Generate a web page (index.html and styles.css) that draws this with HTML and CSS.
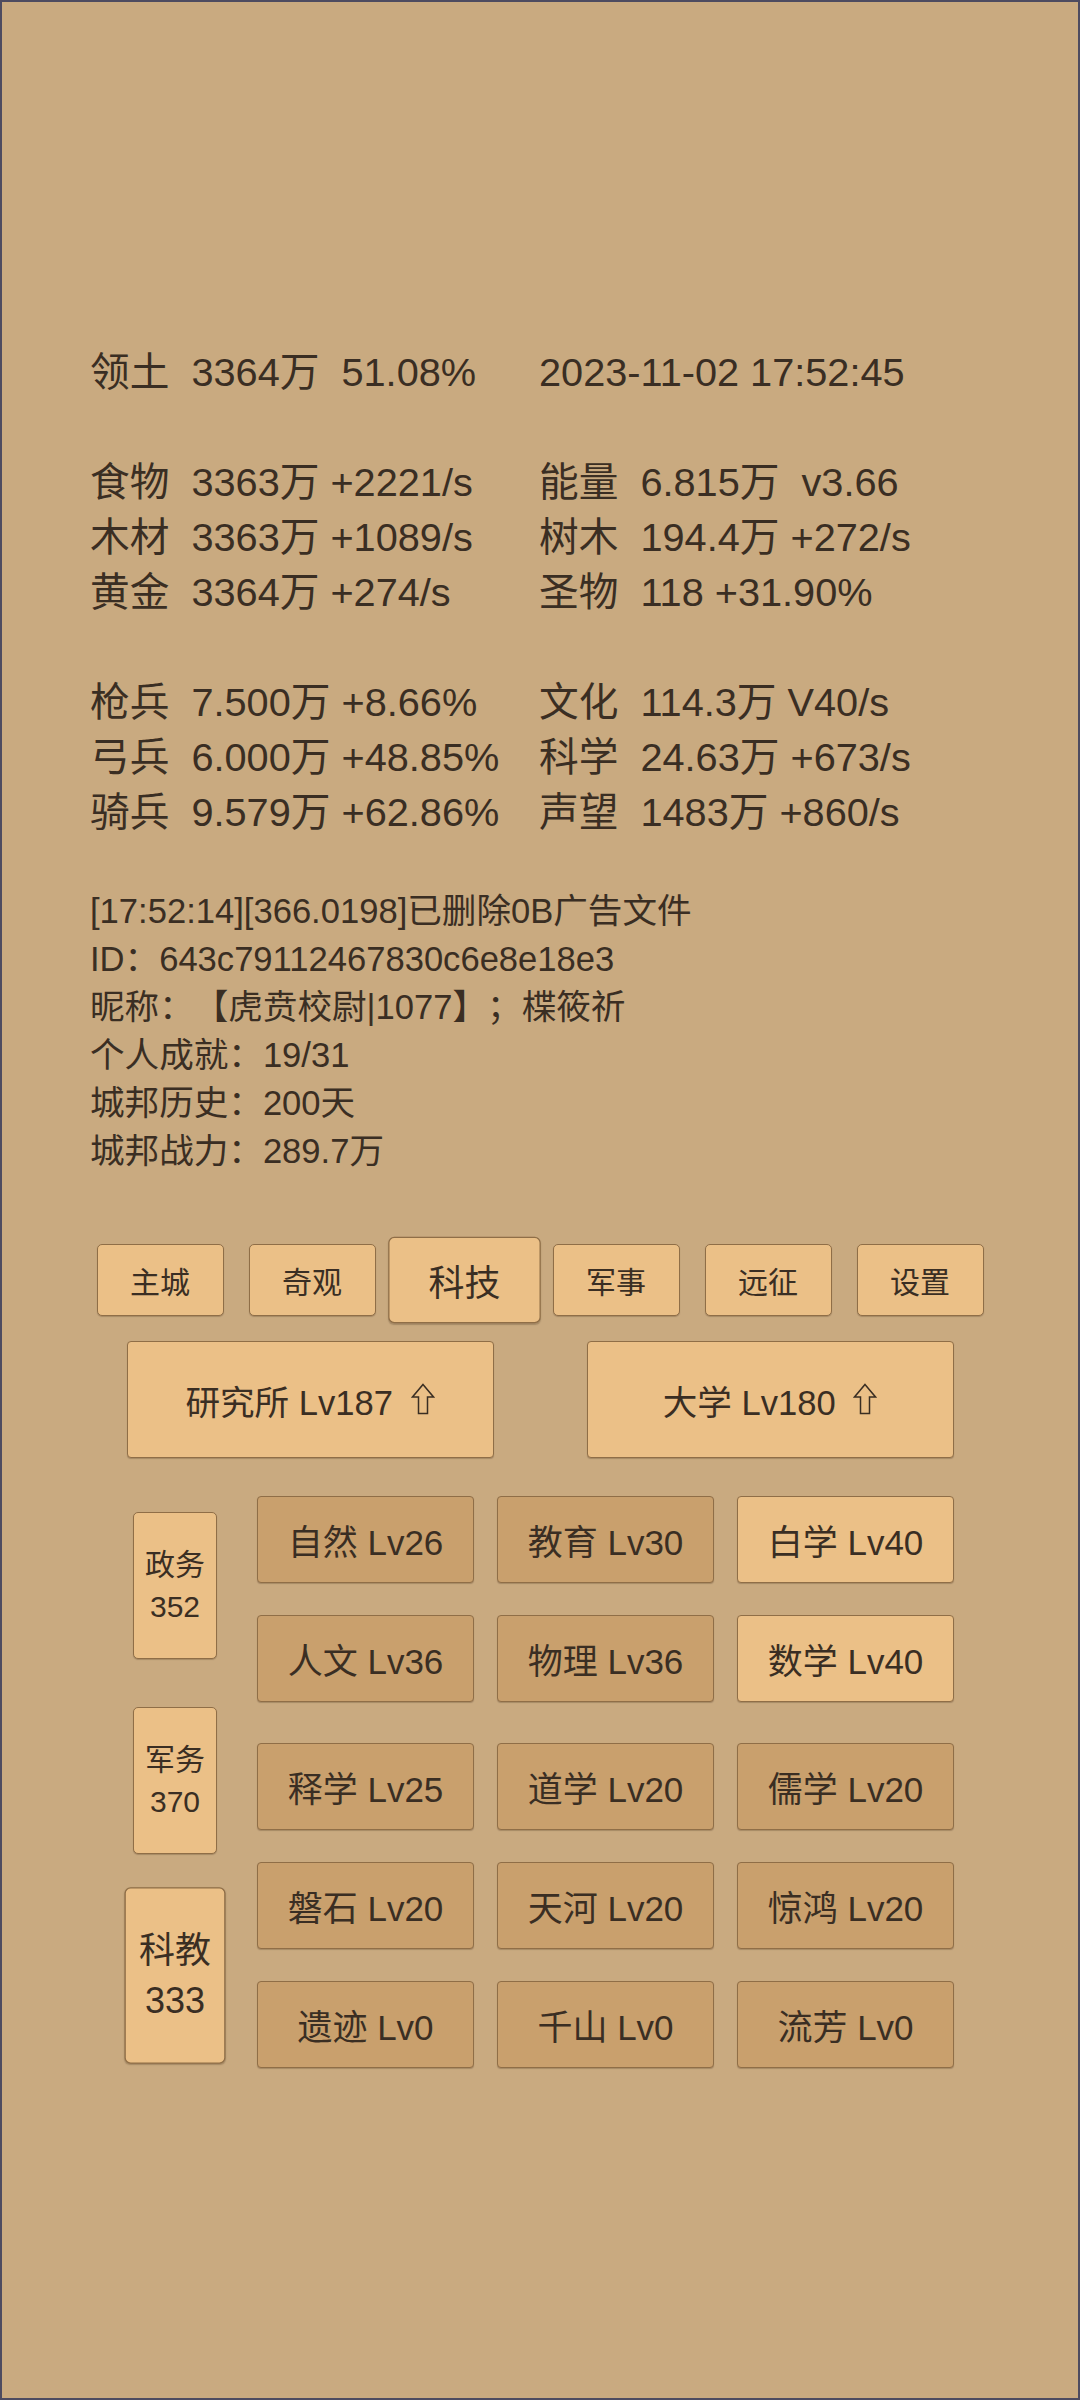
FILE: index.html
```html
<!DOCTYPE html>
<html lang="zh-CN">
<head>
<meta charset="utf-8">
<title>科技</title>
<link rel="stylesheet" href="styles.css">
</head>
<body>
<div class="page">
  <section class="stats">
    <div class="stat-row"><span class="cell">领土  3364万  51.08%</span><span class="cell">2023-11-02 17:52:45</span></div>
    <div class="stat-row blank"></div>
    <div class="stat-row"><span class="cell">食物  3363万 +2221/s</span><span class="cell">能量  6.815万  v3.66</span></div>
    <div class="stat-row"><span class="cell">木材  3363万 +1089/s</span><span class="cell">树木  194.4万 +272/s</span></div>
    <div class="stat-row"><span class="cell">黄金  3364万 +274/s</span><span class="cell">圣物  118 +31.90%</span></div>
    <div class="stat-row blank"></div>
    <div class="stat-row"><span class="cell">枪兵  7.500万 +8.66%</span><span class="cell">文化  114.3万 V40/s</span></div>
    <div class="stat-row"><span class="cell">弓兵  6.000万 +48.85%</span><span class="cell">科学  24.63万 +673/s</span></div>
    <div class="stat-row"><span class="cell">骑兵  9.579万 +62.86%</span><span class="cell">声望  1483万 +860/s</span></div>
  </section>

  <section class="info">
    <p class="info-line">[17:52:14][366.0198]已删除0B广告文件</p>
    <p class="info-line">ID：643c79112467830c6e8e18e3</p>
    <p class="info-line">昵称：【虎贲校尉|1077】；楪筱祈</p>
    <p class="info-line">个人成就：19/31</p>
    <p class="info-line">城邦历史：200天</p>
    <p class="info-line">城邦战力：289.7万</p>
  </section>

  <nav class="tabs">
    <div class="tab">主城</div>
    <div class="tab">奇观</div>
    <div class="tab active">科技</div>
    <div class="tab">军事</div>
    <div class="tab">远征</div>
    <div class="tab">设置</div>
  </nav>

  <div class="buildings">
    <div class="bld">研究所 Lv187 <svg class="up" viewBox="0 0 24 32" width="24" height="32"><path d="M12 1.5 L22.5 14 H16.5 V30.5 H7.5 V14 H1.5 Z"/></svg></div>
    <div class="bld">大学 Lv180 <svg class="up" viewBox="0 0 24 32" width="24" height="32"><path d="M12 1.5 L22.5 14 H16.5 V30.5 H7.5 V14 H1.5 Z"/></svg></div>
  </div>

  <div class="tech">
    <div class="side">
      <div class="side-btn"><span>政务</span><span>352</span></div>
      <div class="side-btn"><span>军务</span><span>370</span></div>
      <div class="side-btn active"><span>科教</span><span>333</span></div>
    </div>
    <div class="grid">
      <div class="grow">
        <div class="tc">自然 Lv26</div>
        <div class="tc">教育 Lv30</div>
        <div class="tc lit">白学 Lv40</div>
      </div>
      <div class="grow">
        <div class="tc">人文 Lv36</div>
        <div class="tc">物理 Lv36</div>
        <div class="tc lit">数学 Lv40</div>
      </div>
      <div class="grow group-start">
        <div class="tc">释学 Lv25</div>
        <div class="tc">道学 Lv20</div>
        <div class="tc">儒学 Lv20</div>
      </div>
      <div class="grow">
        <div class="tc">磐石 Lv20</div>
        <div class="tc">天河 Lv20</div>
        <div class="tc">惊鸿 Lv20</div>
      </div>
      <div class="grow">
        <div class="tc">遗迹 Lv0</div>
        <div class="tc">千山 Lv0</div>
        <div class="tc">流芳 Lv0</div>
      </div>
    </div>
  </div>
</div>
</body>
</html>
```

FILE: styles.css
```css
html, body {
  margin: 0;
  padding: 0;
}

body {
  width: 1080px;
  height: 2400px;
  background: #c9aa80;
  font-family: "Liberation Sans", "Noto Sans CJK SC", sans-serif;
  color: #3a2e23;
  text-spacing-trim: space-all;
}

.page {
  box-sizing: border-box;
  width: 1080px;
  height: 2400px;
  border: 2px solid #4d4b60;
  background: #c9aa80;
  overflow: hidden;
}

/* ---------- stats ---------- */
.stats {
  margin-top: 343px;
  padding-left: 88px;
}

.stat-row {
  display: grid;
  grid-template-columns: 449px auto;
  height: 55px;
  font-size: 39.7px;
  line-height: 55px;
}

.cell {
  white-space: pre;
}

/* ---------- info ---------- */
.info {
  margin-top: 47px;
  padding-left: 88px;
}

.info-line {
  margin: 0;
  font-size: 34.6px;
  line-height: 48px;
  height: 48px;
  white-space: pre;
  text-spacing-trim: space-all;
}

/* ---------- tabs ---------- */
.tabs {
  margin-top: 69px;
  display: flex;
  justify-content: center;
  gap: 25px;
  height: 72px;
}

.tab {
  box-sizing: border-box;
  width: 127px;
  height: 72px;
  display: flex;
  align-items: center;
  justify-content: center;
  font-size: 30px;
  background: #ebc087;
  border: 1px solid #8f6e47;
  border-radius: 5px;
  box-shadow: 0 1px 1px rgba(60, 40, 20, 0.25);
}

.tab.active {
  transform: scale(1.2);
}

/* ---------- buildings ---------- */
.buildings {
  margin-top: 25px;
  display: flex;
  justify-content: center;
  gap: 93px;
}

.bld {
  box-sizing: border-box;
  width: 367px;
  height: 117px;
  display: flex;
  align-items: center;
  justify-content: center;
  font-size: 34.6px;
  white-space: pre;
  background: #ebc087;
  border: 1px solid #8f6e47;
  border-radius: 4px;
  box-shadow: 0 1px 1px rgba(60, 40, 20, 0.25);
}

.up {
  width: 24px;
  height: 32px;
  margin-top: -2px;
  margin-left: 8px;
}

.up path {
  fill: none;
  stroke: #3a2e23;
  stroke-width: 1.5;
  stroke-linejoin: miter;
}

/* ---------- tech area ---------- */
.tech {
  margin-top: 38px;
  padding-left: 131px;
  display: flex;
  gap: 40px;
  align-items: flex-start;
}

.side {
  margin-top: 16px;
  display: flex;
  flex-direction: column;
  gap: 48px;
}

.side-btn {
  box-sizing: border-box;
  width: 84px;
  height: 147px;
  display: flex;
  flex-direction: column;
  align-items: center;
  justify-content: center;
  font-size: 30px;
  line-height: 42px;
  background: #ebc087;
  border: 1px solid #8f6e47;
  border-radius: 5px;
  box-shadow: 0 1px 1px rgba(60, 40, 20, 0.25);
}

.side-btn.active {
  transform: scale(1.2);
}

.grid {
  display: flex;
  flex-direction: column;
  gap: 32px;
}

.grow {
  display: grid;
  grid-template-columns: repeat(3, 217px);
  column-gap: 23px;
}

.grow.group-start {
  margin-top: 9px;
}

.tc {
  box-sizing: border-box;
  height: 87px;
  display: flex;
  align-items: center;
  justify-content: center;
  font-size: 35px;
  white-space: pre;
  background: #c9a06d;
  border: 1px solid #8f6e47;
  border-radius: 4px;
  box-shadow: 0 1px 1px rgba(60, 40, 20, 0.25);
}

.tc.lit {
  background: #ebc087;
}
```
